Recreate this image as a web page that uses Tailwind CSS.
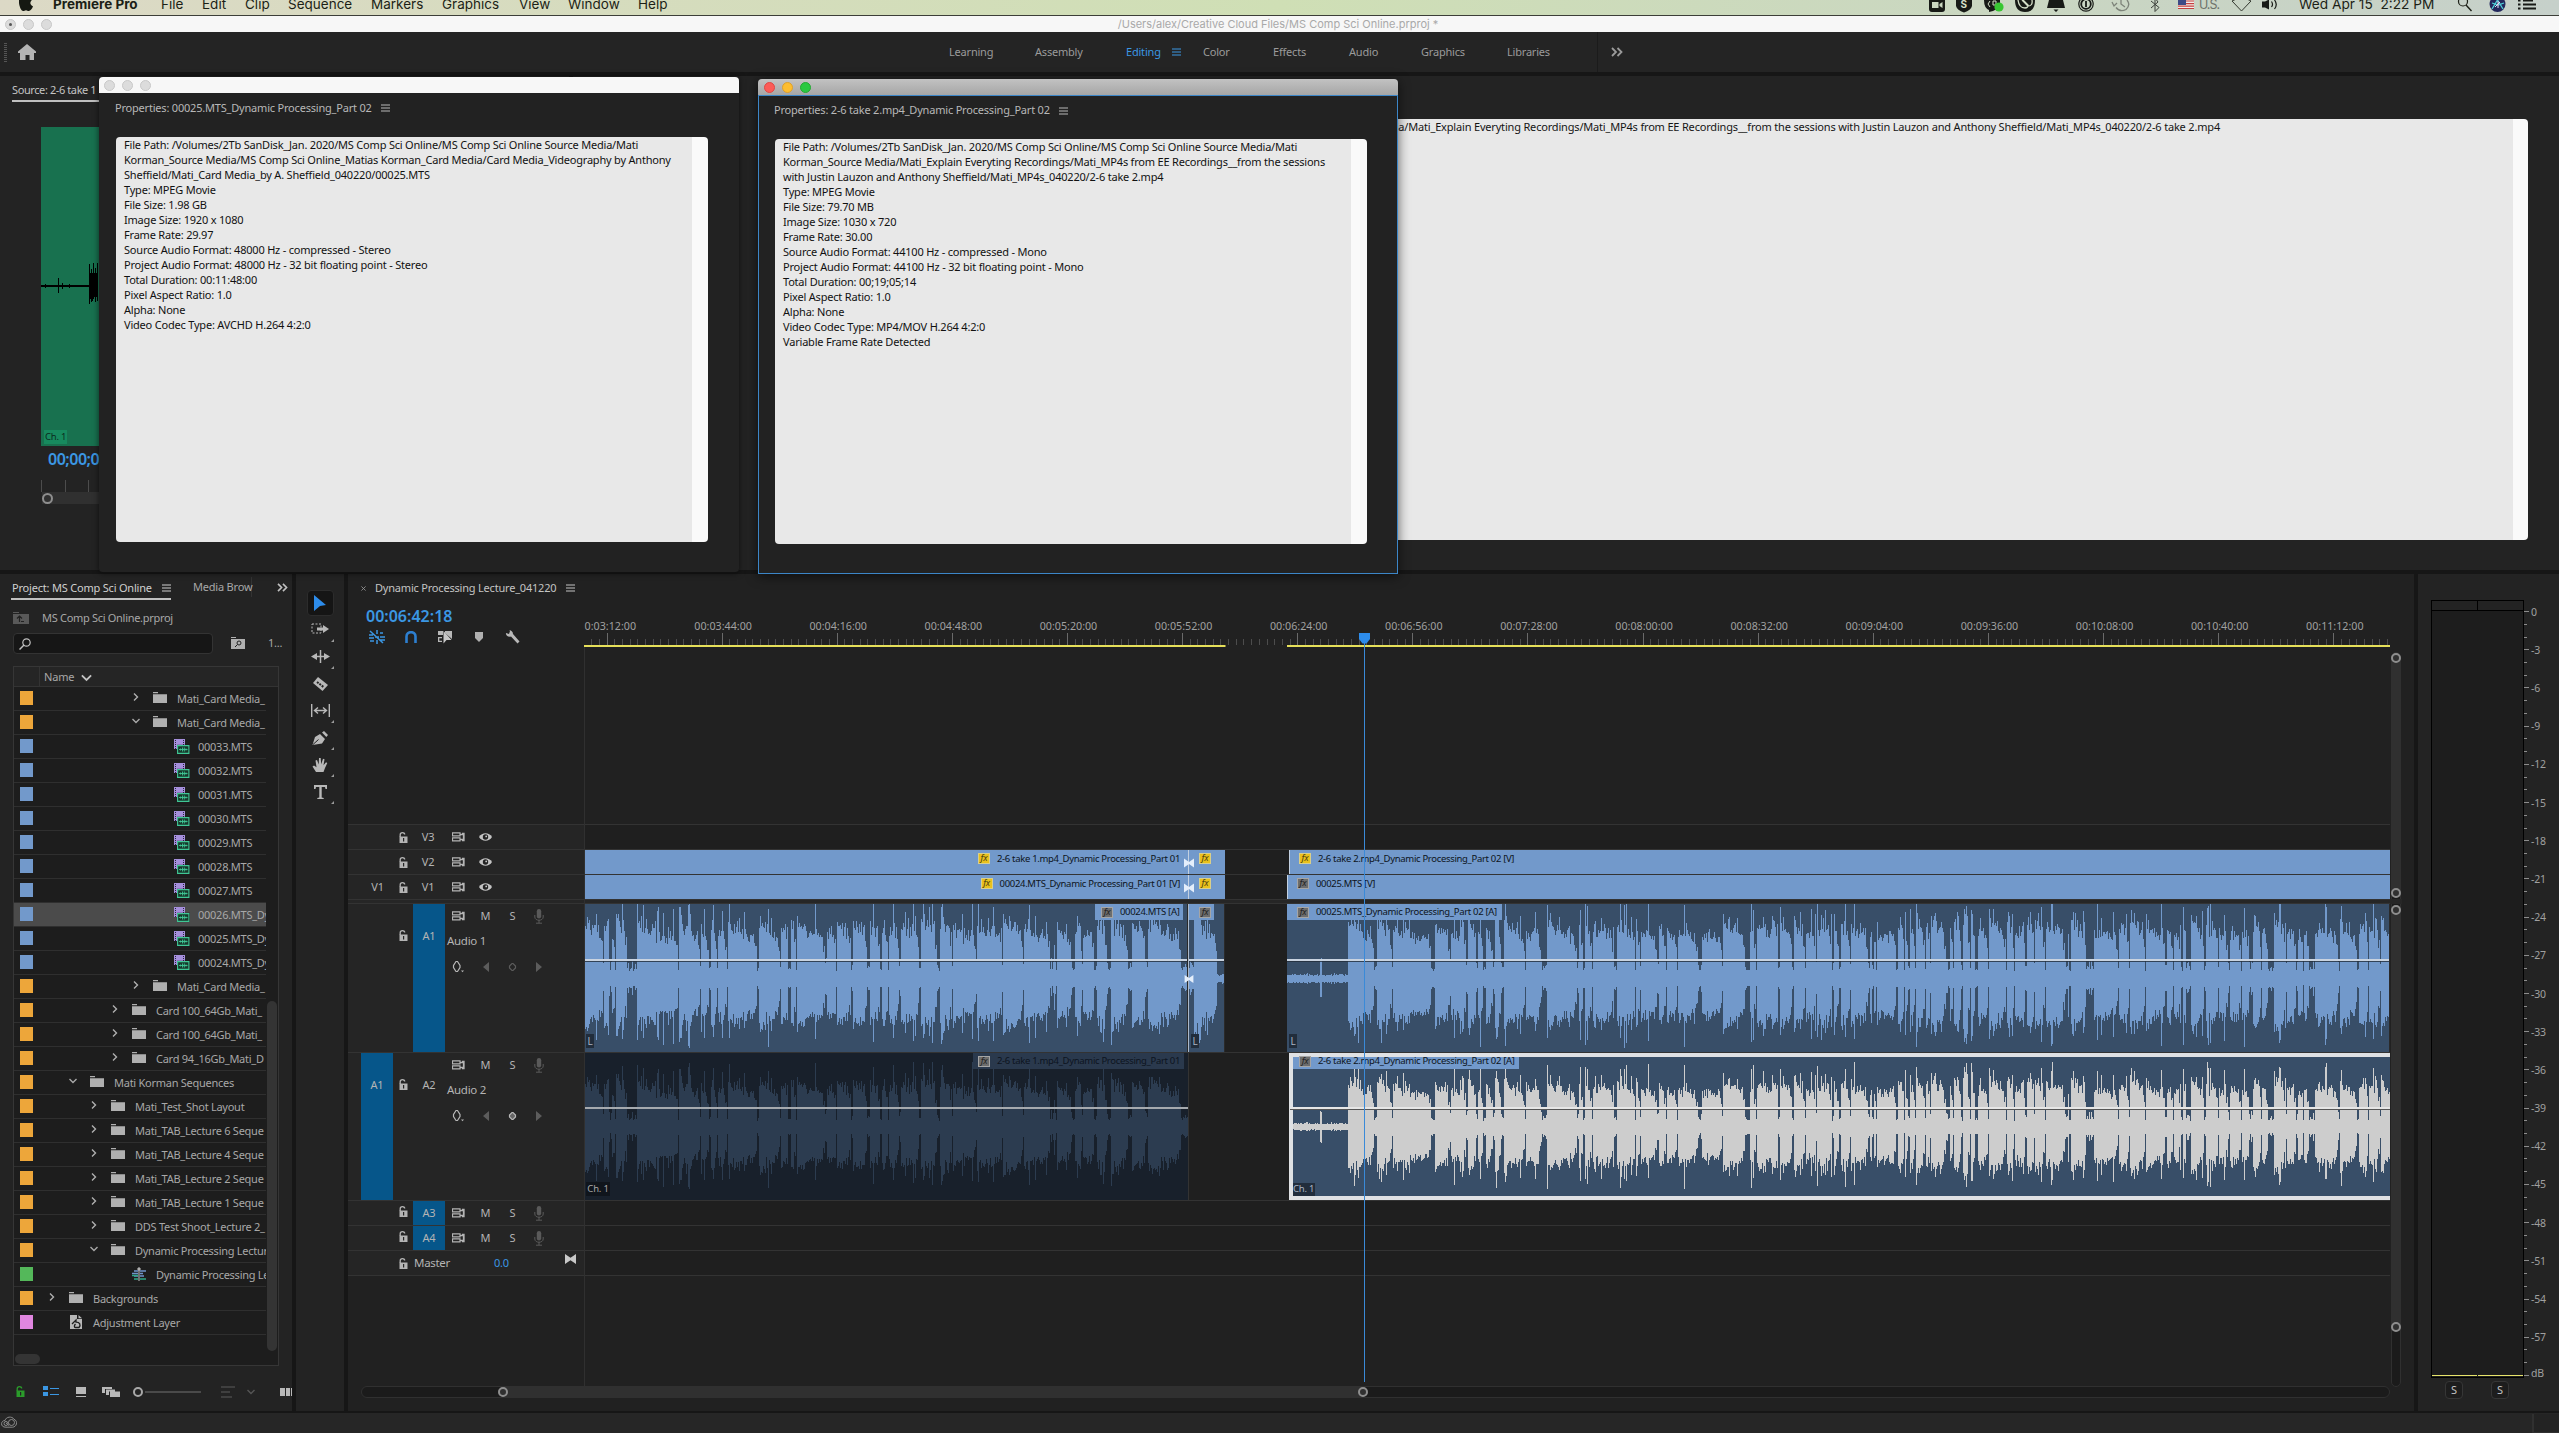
<!DOCTYPE html>
<html lang="en">

<head>
  <meta charset="UTF-8">
  <meta name="viewport" content="width=device-width, initial-scale=1.0">
  <title>MS Comp Sci Online.prproj</title>
  <script src="https://cdn.jsdelivr.net/npm/@tailwindcss/browser@4"></script>
</head>

<body class="bg-[#161616] font-['Noto_Sans','Open_Sans',sans-serif] text-[11px] tracking-[-0.2px] text-[#a8a8a8] overflow-hidden">

  <!-- Icon symbols -->
  <svg class="hidden">
    <symbol id="menu" viewBox="0 0 9 8"><path d="M0 1h9M0 4h9M0 7h9" stroke="currentColor" stroke-width="1" /></symbol>
    <symbol id="more" viewBox="0 0 12 10"><path d="M1 1l4 4-4 4M6.500 1l4 4-4 4" fill="none" stroke="currentColor" stroke-width="1.800" /></symbol>
    <symbol id="folder" viewBox="0 0 14 12"><path d="M0 0h5v1.200H0zM0 2.200h14V11H0z" fill="#b0b0b0" /></symbol>
    <symbol id="right" viewBox="0 0 6 8"><path d="M1 .5L4.500 4 1 7.500" fill="none" stroke="#b0b0b0" stroke-width="1.400" /></symbol>
    <symbol id="down" viewBox="0 0 8 6"><path d="M.5 1L4 4.500 7.500 1" fill="none" stroke="currentColor" stroke-width="1.400" /></symbol>
    <symbol id="mts" viewBox="0 0 16 16">
      <path d="M0 0h11v10H0z" fill="#a58fdc" />
      <path d="M1.500 1v9M9.500 1v9" stroke="#2a2140" stroke-width="1" stroke-dasharray="1 1" />
      <path d="M3 5.800h13v9H3z" fill="#1d1d1d" />
      <path d="M3.600 6.600h11.300v7.800H3.600z" fill="#17382c" stroke="#3fc795" stroke-width="1.100" />
      <path d="M5 10.500h8.500M6.500 9.500v2M8.500 8.500v4M10.300 8.500v4M12 9.500v2" stroke="#3fc795" stroke-width=".9" />
    </symbol>
    <symbol id="seq" viewBox="0 0 14 14">
      <path d="M2 4h4M8 4h6M0 6.500h6M8 6.500h3M2 9h4M8 9h4" stroke="#6f94c9" stroke-width="1.300" />
      <path d="M0 8.500h6M2 12h4M8 12h6" stroke="#2fa887" stroke-width="1.500" />
      <path d="M7 1v13M6 1h2v2H6z" stroke="#c4c4c4" stroke-width="1" fill="none" />
    </symbol>
    <symbol id="adj" viewBox="0 0 12 14">
      <path d="M0 0h7v4h5v10H0z" fill="#b8b8b8" /><path d="M8.500 0L12 3.300H8.500z" fill="#b8b8b8" />
      <path d="M2 9l4-4v2.200c4 0 5 2.800 3 5.300H5.500c-1.500 0-1.500-2 0-3.500" fill="none" stroke="#1d1d1d" stroke-width="1.300" />
    </symbol>
    <symbol id="lock" viewBox="0 0 9 11"><path d="M1.200 5V2.800C1.200 0 5.700 0 5.700 2.600" fill="none" stroke="currentColor" stroke-width="1.300" /><path fill-rule="evenodd" d="M.5 4.600h8V11h-8zM4 6h1.200v3.500H4z" fill="currentColor" /></symbol>
    <symbol id="sync" viewBox="0 0 13 10"><path d="M.5.8h7.500v3H.5zM.5 5.800h7.500v3H.5z" fill="none" stroke="currentColor" stroke-width="1.200" /><path d="M8 2.500h3.500v5H8M10 1.500h2v7h-2" fill="none" stroke="currentColor" stroke-width="1.300" /></symbol>
    <symbol id="eye" viewBox="0 0 13 10"><path d="M0 5C3 0 10 0 13 5 10 10 3 10 0 5z" fill="#c4c4c4" /><circle cx="6.500" cy="5" r="2.700" fill="#222" /><circle cx="7.200" cy="4.400" r=".9" fill="#ccc" /></symbol>
    <symbol id="mic" viewBox="0 0 10 15"><rect x="2.800" y="0" width="4.400" height="9.500" rx="2.200" fill="#5a5a5a" /><path d="M.8 6v2c0 4.300 8.400 4.300 8.400 0V6M5 11v3M2 14.200h6" fill="none" stroke="#5a5a5a" stroke-width="1" /></symbol>
    <symbol id="bow" viewBox="0 0 11 10"><path d="M0 0l5.500 3.800L11 0v10L5.500 6.200 0 10z" fill="currentColor" /></symbol>
    <symbol id="corner" viewBox="0 0 3 3"><path d="M3 0v3H0z" fill="#9a9a9a" /></symbol>
  </svg>

  <div class="relative w-[2559px] h-[1433px] flex flex-col">

    <!-- macOS menu bar -->
    <header class="h-[15px] shrink-0 flex items-start justify-between bg-linear-to-r from-[#dcd9c6] via-[#cfdfb5] to-[#c6d0ca] text-[#1c1f16] font-['Inter',sans-serif] text-[13.5px] leading-[9px] tracking-normal overflow-hidden">
      <div class="flex">
        <svg class="w-[14px] h-[11px] ml-[19px] mr-5" viewBox="0 0 14 11"><path d="M0 0h13c-2.500 2-2 5 1 6.300C13 9 11.500 11 9.800 11 8.500 11 8.300 10.200 7 10.200S5.300 11 4.200 11C2 11 .3 6 0 3z" fill="#151812" /></svg>
        <span class="w-[108px] font-bold">Premiere Pro</span>
        <span class="w-[41px]">File</span><span class="w-[43px]">Edit</span><span class="w-[43px]">Clip</span><span class="w-[83px]">Sequence</span><span class="w-[71px]">Markers</span><span class="w-[77px]">Graphics</span><span class="w-[49px]">View</span><span class="w-[70px]">Window</span><span>Help</span>
      </div>
      <svg class="w-[630px] h-[15px]" viewBox="1929 0 630 15">
        <path fill-rule="evenodd" d="M1929 0h16v9q0 3-3 3h-10q-3 0-3-3zM1932 2h6.500v6h-6.500zM1939.500 4l3-2v6l-3-2z" fill="#171a16" />
        <path d="M1956 0h16v6q-1 4-8 6.500-7-2.500-8-6.500z" fill="#171a16" />
        <text x="1960.500" y="8" font-size="10" font-weight="700" fill="#d5dfc8">S</text>
        <path d="M1984 0h16v6q-3 4-7 5l-4 1v-2q-5-2-5-10z" fill="#171a16" /><path d="M1990 1l-2 3 2 3M1993 1h3v4h-3z" stroke="#d5dfc8" fill="none" />
        <circle cx="1999" cy="7" r="4.600" fill="#38c732" />
        <path d="M2015 0h20q0 12-10 12t-10-12z" fill="#171a16" /><path d="M2018 0q1 8 7 8 3 0 3-3l-5-5M2022 0l6 6q5 0 4-6" fill="none" stroke="#d5dfc8" stroke-width="1.300" />
        <path d="M2049 0h14l2 8h-18zM2053.500 9.500h5l-2.500 2.500z" fill="#171a16" />
        <circle cx="2086" cy="4" r="7.200" fill="none" stroke="#171a16" stroke-width="1.200" /><circle cx="2086" cy="4" r="4.800" fill="none" stroke="#171a16" stroke-width="1.800" /><path d="M2086 1v6" stroke="#171a16" stroke-width="1.800" />
        <path d="M2127 0q4 5-1 9.500-6 3-10-2M2112 2l2 4 3-3M2121 0v4l4 3" fill="none" stroke="#7d8379" stroke-width="1.300" />
        <path d="M2151 1l8 6.500-4 4V0M2151 8l7-6-1.500-2" fill="none" stroke="#3a3f38" />
        <path d="M2178 0h16v9h-16z" fill="#f3ecea" /><path d="M2178 1h16M2178 3.600h16M2178 6.200h16M2178 8.500h16" stroke="#c5403f" stroke-width="1.200" /><path d="M2178 0h8v5h-8z" fill="#3d4a86" />
        <text x="2199" y="8.500" font-size="12.500" fill="#6d736b" textLength="21">U.S.</text>
        <path d="M2232 1q10-6 19 0l-9.500 10z" fill="none" stroke="#33382f" />
        <path d="M2262 1.500h3l4-2v10l-4-2h-3z" fill="#171a16" /><path d="M2271.500 1.500q2 3 0 5.500M2274.500 0q3.500 4.500 0 9" fill="none" stroke="#171a16" stroke-width="1.200" />
        <text x="2299" y="8.700" font-size="13.700" fill="#1c1f16" xml:space="preserve">Wed Apr 15  2:22 PM</text>
        <circle cx="2463" cy="1.500" r="4.500" fill="none" stroke="#1c1f16" stroke-width="1.200" /><path d="M2466 5l5.500 6" stroke="#1c1f16" stroke-width="1.400" />
        <circle cx="2497.500" cy="4" r="8" fill="#23285c" /><path d="M2492 9l5.500-9 5.500 9M2492 3l6 2 6-2" fill="none" stroke="#4fd0d8" stroke-width="1.300" /><path d="M2495 7l5-5M2498 1v7" stroke="#e8d8f4" stroke-width="1" />
        <path d="M2523 .5h10M2523 4.500h13M2523 8.500h13" stroke="#171a16" stroke-width="1.800" /><path d="M2518 .5h2.500M2518 4.500h2.500M2518 8.500h2.500" stroke="#171a16" stroke-width="1.800" />
      </svg>
    </header>

    <!-- Application title bar -->
    <div class="h-[17px] shrink-0 border-t border-[#3c3e38] bg-[#f7f7f7] flex items-center relative">
      <div class="flex gap-[7px] pl-[5px]">
        <span class="size-[11px] rounded-full bg-[#dcdcdc] border border-[#c8c8c8] flex items-center justify-center"><i class="size-[3px] rounded-full bg-[#555]"></i></span>
        <span class="size-[11px] rounded-full bg-[#dcdcdc] border border-[#c8c8c8]"></span>
        <span class="size-[11px] rounded-full bg-[#dcdcdc] border border-[#c8c8c8]"></span>
      </div>
      <p class="w-full pr-[55px] text-center font-['Inter',sans-serif] text-[11px] tracking-normal text-[#a9a9a9]">/Users/alex/Creative Cloud Files/MS Comp Sci Online.prproj *</p>
    </div>

    <!-- Workspace tabs -->
    <nav class="h-10 shrink-0 bg-[#242424] flex items-center text-[#9b9b9b]">
      <div class="w-[3px] h-[19px] ml-1 bg-[repeating-linear-gradient(#555_0_1px,transparent_1px_2px)]"></div>
      <svg class="w-[18px] h-4 ml-[11px] mr-[913px]" viewBox="0 0 18 16"><path d="M9 0l9 7.500V9h-2v7h-4.500v-5h-4v5H2V9H0V7.500z" fill="#b4b4b4" /></svg>
      <span class="w-[86px]">Learning</span><span class="w-[91px]">Assembly</span>
      <span class="w-[46px] text-[#3b97e3]">Editing</span>
      <svg class="w-[9px] h-2 mr-[22px] text-[#3b97e3]"><use href="#menu" /></svg>
      <span class="w-[70px]">Color</span><span class="w-[76px]">Effects</span><span class="w-[72px]">Audio</span><span class="w-[86px]">Graphics</span><span class="w-[90px]">Libraries</span>
      <i class="w-px h-full bg-[#1b1b1b]"></i>
      <svg class="w-3 h-[10px] ml-[13px]"><use href="#more" /></svg>
    </nav>

    <!-- Source monitor and properties panel -->
    <section class="h-[494px] mt-1 shrink-0 flex gap-1">
      <div class="w-[745px] bg-[#232323] pl-3">
        <p class="w-[200px] mt-[5px] h-[21px] leading-[18px] tracking-[-0.4px] border-b-2 border-[#c0c0c0] whitespace-nowrap overflow-hidden text-[#c4c4c4]">Source: 2-6 take 1</p>
        <div class="ml-[29px] mt-[25px] w-[200px] h-[319px] bg-[#18714f] relative">
          <svg class="absolute inset-0 w-[200px] h-[319px]" viewBox="0 0 200 319">
            <path d="M0 159h48" stroke="#000" stroke-width="2" />
            <path d="M17.500 151v15M4.500 157v4M21.500 156v6M28.500 157v4M48.500 137v40M50.500 142v33M52.500 136v36M54.500 141v34M56.500 136v38M49.500 146v26M51.500 146v28M53.500 146v24M55.500 146v24" stroke="#000" />
          </svg>
          <span class="absolute left-[3px] bottom-[2px] h-[14px] leading-[14px] px-[1px] whitespace-nowrap bg-[#178a5e] text-[#0a2b1d] text-[9.5px]">Ch. 1</span>
        </div>
        <p class="ml-9 mt-[2px] text-base leading-[22px] font-semibold tracking-[-0.5px] text-[#3b97e3]">00;00;03;14</p>
        <div class="ml-[29px] mt-[10px] w-[200px] h-3 bg-[repeating-linear-gradient(90deg,#4c4c4c_0_1px,transparent_1px_23.5px)]"></div>
        <div class="ml-[30px] w-[200px] h-3 bg-[#303030] pt-px"><i class="block size-[11px] rounded-full border-2 border-[#8e8e8e]"></i></div>
      </div>
      <div class="flex-1 bg-[#232323] pt-[43px] pl-[200px] pr-[31px]">
        <div class="h-[421px] bg-[#e8e8e8] rounded-sm border-r-[15px] border-[#fafafa] flex justify-end pr-[293px] overflow-hidden">
          <p class="whitespace-nowrap leading-[15px] tracking-[-0.18px] text-[#151515]">File Path: /Volumes/2Tb SanDisk_Jan. 2020/MS Comp Sci Online/MS Comp Sci Online Source Media/Mati Korman_Source Media/Mati_Explain Everyting Recordings/Mati_MP4s from EE Recordings__from the sessions with Justin Lauzon and Anthony Sheffield/Mati_MP4s_040220/2-6 take 2.mp4</p>
        </div>
      </div>
    </section>

    <!-- Lower panels -->
    <section class="h-[837px] mt-1 shrink-0 flex gap-1">

      <!-- Project bin -->
      <div class="w-[292px] bg-[#232323] flex flex-col overflow-hidden">
        <div class="flex items-center h-[26px] mt-[1px] pl-[11px] pb-[2px] whitespace-nowrap">
          <div class="w-[160px] h-[22px] mt-1 flex items-center justify-between border-b-2 border-[#c0c0c0] text-[#d0d0d0] pl-px">Project: MS Comp Sci Online<svg class="w-[9px] h-2"><use href="#menu" /></svg></div>
          <div class="w-[59px] ml-[22px] border-r border-[#333] h-[20px] leading-5">Media Brow</div>
          <svg class="w-[11px] h-[9px] ml-[25px] text-[#c0c0c0]"><use href="#more" /></svg>
        </div>
        <div class="flex items-center h-5 mt-[9px] pl-[13px] gap-[13px]">
          <svg class="w-4 h-3" viewBox="0 0 16 12"><path d="M0 0h6v1H0zM0 2h16v10H0z" fill="#595959" /><path d="M8 9.500h3M6.500 10V4.500M4 6.500L6.500 4 9 6.500" fill="none" stroke="#222" stroke-width="1.200" /></svg>
          <span class="tracking-[-0.3px]">MS Comp Sci Online.prproj</span>
        </div>
        <div class="flex items-center pl-[13px] mt-[6px] h-[21px]">
          <div class="w-[200px] h-[21px] bg-[#161616] border border-[#333] rounded-sm pl-[5px] pt-[4px]"><svg class="size-3" viewBox="0 0 12 12"><circle cx="7.500" cy="4.500" r="3.700" fill="none" stroke="#c0c0c0" stroke-width="1.200" /><path d="M5 7L.5 11.500" stroke="#c0c0c0" stroke-width="1.500" /></svg></div>
          <svg class="w-[14px] h-3 ml-[18px] mr-[23px]" viewBox="0 0 14 12"><path d="M0 0h5v1H0zM0 2h14v10H0z" fill="#b0b0b0" /><circle cx="8" cy="6" r="2" fill="none" stroke="#222" /><path d="M6.500 7.500L4 10" stroke="#222" /></svg>
          <span>1...</span>
        </div>
        <div class="ml-[13px] mt-[12px] w-[266px] h-[700px] shrink-0 border border-[#363636] bg-[#1d1d1d] relative">
          <div class="h-[20px] flex items-center bg-[#252525] border-b border-[#333]">
            <i class="w-[26px] h-full border-r border-[#333]"></i><span class="ml-1 w-[37px] pt-[2px]">Name</span><svg class="w-[11px] h-2 mt-[4px] text-[#c0c0c0]" viewBox="0 0 8 6"><use href="#down" /></svg>
          </div>
          <div id="bin" class="w-[252px]"></div>
          <i class="absolute right-px top-[334px] w-[10px] h-[350px] rounded-full bg-[#343434]"></i>
          <i class="absolute left-px bottom-px w-[25px] h-[10px] rounded-full bg-[#343434]"></i>
        </div>
        <div class="flex items-center h-[50px] mt-[1px] shrink-0 pl-4 text-[#555]">
          <svg class="w-[9px] h-[11px] text-[#2b9c2b]"><use href="#lock" /></svg>
          <svg class="w-4 h-[11px] ml-[18px]" viewBox="0 0 16 11"><path d="M0 0h5v4H0zM0 6h5v4H0zM7 2h9v1H7zM7 8h9v1H7z" fill="#3b97e3" /></svg>
          <svg class="w-[10px] h-[10px] ml-[17px]" viewBox="0 0 10 10"><path d="M0 0h10v7H0zM0 9h10v1H0z" fill="#b8b8b8" /></svg>
          <svg class="w-[18px] h-[10px] ml-4" viewBox="0 0 18 10"><path d="M0 0h10v2H3v4H0zM4 2.500h9v2H7V8H4zM8 4.500h10V10H8z" fill="#b8b8b8" /></svg>
          <i class="size-[10px] rounded-full border-2 border-[#a8a8a8] ml-[13px]"></i>
          <i class="w-14 h-[2px] bg-[#4a4a4a] ml-[2px]"></i>
          <svg class="w-[14px] h-3 ml-5" viewBox="0 0 14 12"><path d="M0 1h14M0 6h9M0 11h11" stroke="#4a4a4a" stroke-width="1.300" /></svg>
          <svg class="w-2 h-[6px] ml-3"><use href="#down" /></svg>
          <svg class="w-3 h-2 ml-[25px] shrink-0" viewBox="0 0 12 8"><path d="M0 0h5v8H0zM6 0h4v8H6zM11 0h1v8h-1z" fill="#b8b8b8" /></svg>
        </div>
      </div>

      <!-- Tools -->
      <div class="w-12 bg-[#232323] pt-[16px] flex flex-col items-center text-[#b8b8b8]">
        <div class="w-[27px] h-[26px] rounded-sm bg-[#151515] border border-[#2c2c2c] flex items-center justify-center"><svg class="w-3 h-4" viewBox="0 0 12 16"><path d="M0 0l12 10-6 1-6 5z" fill="#2d8ceb" /></svg></div>
        <div id="tools" class="flex flex-col"></div>
      </div>

      <!-- Timeline -->
      <div class="w-[2066px] bg-[#212121] relative">
        <div class="flex flex-col h-[250px]">
          <div class="flex items-center h-7 pl-[13px] text-[#c4c4c4]">
            <svg class="size-[5px] mr-[9px]" viewBox="0 0 6 6"><path d="M.5.5l5 5M5.500.5l-5 5" stroke="#999" /></svg>
            <span class="w-[191px]">Dynamic Processing Lecture_041220</span>
            <svg class="w-[9px] h-2"><use href="#menu" /></svg>
          </div>
          <div class="flex h-[46px]">
            <div class="w-[236px] pt-[3px]">
              <p class="pl-[18px] text-base leading-[22px] font-semibold tracking-[0px] text-[#3b97e3]">00:06:42:18</p>
              <div class="flex items-center h-4 mt-[2px] pl-[21px]">
                <svg class="w-4 h-[14px]" viewBox="0 0 16 14"><path d="M0 5h4M0 8h5M1 11h4M11 3h3M11 7h5M11 10h5M8 0v4M8 10v4M1 1l13 12M10 7h-4" stroke="#3b97e3" stroke-width="1.500" fill="none" /></svg>
                <svg class="w-3 h-3 ml-5" viewBox="0 0 12 12"><path d="M1.500 12V5.500C1.500-.3 10.500-.3 10.500 5.500V12" fill="none" stroke="#2d7fd0" stroke-width="2.600" /></svg>
                <svg class="w-[15px] h-[14px] ml-[21px]" viewBox="0 0 15 14"><path d="M0 1h5v4H0zM7 1h7v8l-7-6zM0 7h4v1.300H1.300v2.400H4V12H0z" fill="#b8b8b8" /><path d="M5.500 1v12.500l3-3.500h5z" fill="#c8c8c8" /></svg>
                <svg class="w-2 h-[10px] ml-[22px]" viewBox="0 0 8 10"><path d="M0 0h8v6l-4 4-4-4z" fill="#b0b0b0" /></svg>
                <svg class="w-[15px] h-[14px] ml-[22px]" viewBox="0 0 15 14"><path d="M1 3l3 1 1-3C3-.5 8 0 8 4l6.500 7.500-2 2L6 6.500C3 7.500.5 5 1 3z" fill="#b8b8b8" /></svg>
              </div>
            </div>
            <svg id="ruler" class="w-[1806px] h-[46px] overflow-hidden" viewBox="584 602 1806 46"></svg>
          </div>
        </div>

        <div id="tracks" class="w-[2042px] border-b border-[#333]"></div>

        <!-- horizontal zoom bar -->
        <div class="mt-[110px] ml-[13px] w-[2029px] h-[12px] rounded-full bg-[#1b1b1b] border border-[#303030] flex items-center pl-[136px]">
          <div class="w-[870px] h-[10px] rounded-full bg-[#303030] flex items-center justify-between"><i class="size-[10px] rounded-full border-2 border-[#8e8e8e]"></i><i class="size-[10px] rounded-full border-2 border-[#8e8e8e]"></i></div>
        </div>

        <!-- header divider, vertical bars -->
        <i class="absolute left-[236px] top-[73px] w-px h-[739px] bg-[#303030]"></i>
        <div class="absolute left-[2043px] top-[78px] w-[10px] h-[735px] rounded-full bg-[#1b1b1b] border border-[#303030]"></div>
        <div class="absolute left-[2043px] top-[79px] w-[10px] h-[245px] rounded-full bg-[#303030] flex flex-col justify-between"><i class="size-[10px] rounded-full border-2 border-[#8e8e8e]"></i><i class="size-[10px] rounded-full border-2 border-[#8e8e8e]"></i></div>
        <i class="absolute left-[2042px] top-[325px] w-3 h-[5px] bg-[#262626]"></i>
        <div class="absolute left-[2043px] top-[331px] w-[10px] h-[427px] rounded-full bg-[#303030] flex flex-col justify-between"><i class="size-[10px] rounded-full border-2 border-[#8e8e8e]"></i><i class="size-[10px] rounded-full border-2 border-[#8e8e8e]"></i></div>

        <!-- playhead -->
        <i class="absolute left-[1016px] top-[66px] w-px h-[742px] bg-[#3a8ad8]"></i>
        <svg class="absolute left-[1011px] top-[59px] w-[11px] h-[11px]" viewBox="0 0 11 11"><path d="M0 0h11v6L7.500 10.500h-4L0 6z" fill="#2d8ceb" /></svg>
      </div>

      <!-- Audio meters -->
      <div class="flex-1 bg-[#232323] pl-[13px] pt-[26px]">
        <div class="flex">
          <div class="w-[93px]">
            <div class="h-[10px] border border-black border-b-0 flex"><i class="w-[46px] border-r border-black"></i></div>
            <div class="h-[768px] border border-black bg-[#1d1d1d] flex items-end gap-px"><i class="flex-1 h-px mb-px bg-[#e6e36a]"></i><i class="flex-1 h-px mb-px bg-[#e6e36a]"></i></div>
          </div>
          <svg id="meter" class="w-[35px] h-[790px] mt-[-6px]" viewBox="2524 594 35 790"></svg>
        </div>
        <div class="flex gap-7 pl-[14px] -mt-[3px] text-[#c4c4c4]">
          <span class="size-[18px] border border-[#363636] rounded-sm bg-[#1d1d1d] flex items-center justify-center">S</span>
          <span class="size-[18px] border border-[#363636] rounded-sm bg-[#1d1d1d] flex items-center justify-center">S</span>
        </div>
      </div>
    </section>

    <!-- Status bar -->
    <footer class="h-5 mt-[2px] shrink-0 bg-[#262626] flex items-center justify-between pl-px">
      <svg class="w-4 h-3 mb-[3px]" viewBox="0 0 16 12"><path d="M5 11.200C-1 11.500-.5 4.500 4 4.500 5 .5 11 0 13 3.200c4.500 2 2.500 8-1.500 8z" fill="none" stroke="#8c8c8c" /><circle cx="5" cy="7.500" r="2" fill="none" stroke="#8c8c8c" /><circle cx="10.500" cy="6.500" r="3" fill="none" stroke="#8c8c8c" /><path d="M5 7l3 2.500" stroke="#8c8c8c" /></svg>
      <i class="w-[27px] h-[19px] border-l-2 border-b border-[#303030] bg-[#232323]"></i>
    </footer>

    <!-- Floating properties window, inactive -->
    <div class="absolute left-[99px] top-[77px] w-[640px] h-[496px] bg-[#222] rounded-t-sm rounded-b-sm shadow-[0_0_6px_rgba(0,0,0,0.6)] border-b border-[#111] overflow-hidden">
      <div class="h-4 bg-[#f7f7f7] flex items-center gap-[7px] pl-[5px]">
        <i class="size-[11px] rounded-full bg-[#dcdcdc] border border-[#c8c8c8]"></i><i class="size-[11px] rounded-full bg-[#dcdcdc] border border-[#c8c8c8]"></i><i class="size-[11px] rounded-full bg-[#dcdcdc] border border-[#c8c8c8]"></i>
      </div>
      <div class="h-[30px] flex items-center pl-[16px] text-[#b8b8b8]"><span class="w-[266px]">Properties: 00025.MTS_Dynamic Processing_Part 02</span><svg class="w-[9px] h-2"><use href="#menu" /></svg></div>
      <div class="ml-[17px] mt-[14px] w-[592px] h-[405px] rounded-sm bg-[#e8e8e8] border-r-[16px] border-[#fafafa] pl-2 leading-[15px] text-[#111] whitespace-nowrap">
        File Path: /Volumes/2Tb SanDisk_Jan. 2020/MS Comp Sci Online/MS Comp Sci Online Source Media/Mati<br>
        Korman_Source Media/MS Comp Sci Online_Matias Korman_Card Media/Card Media_Videography by Anthony<br>
        Sheffield/Mati_Card Media_by A. Sheffield_040220/00025.MTS<br>
        Type: MPEG Movie<br>File Size: 1.98 GB<br>Image Size: 1920 x 1080<br>Frame Rate: 29.97<br>
        Source Audio Format: 48000 Hz - compressed - Stereo<br>
        Project Audio Format: 48000 Hz - 32 bit floating point - Stereo<br>
        Total Duration: 00:11:48:00<br>Pixel Aspect Ratio: 1.0<br>Alpha: None<br>Video Codec Type: AVCHD H.264 4:2:0
      </div>
    </div>

    <!-- Floating properties window, active -->
    <div class="absolute left-[758px] top-[79px] w-[640px] h-[495px] bg-[#222] rounded-t-sm shadow-[0_2px_12px_rgba(0,0,0,0.6)]">
      <div class="h-4 rounded-t-sm bg-linear-to-b from-[#c2c2c2] to-[#a6a6a6] flex items-center gap-[7px] pl-[6px]">
        <i class="size-[11px] rounded-full bg-[#fc5b57] border border-[#df4744]"></i><i class="size-[11px] rounded-full bg-[#fdbd30] border border-[#dda02c]"></i><i class="size-[11px] rounded-full bg-[#2ac941] border border-[#24a932]"></i>
      </div>
      <div class="h-[479px] border border-[#3c86c8]">
        <div class="h-[29px] flex items-center pl-[15px] text-[#b8b8b8]"><span class="w-[285px]">Properties: 2-6 take 2.mp4_Dynamic Processing_Part 02</span><svg class="w-[9px] h-2"><use href="#menu" /></svg></div>
        <div class="ml-4 mt-[14px] w-[592px] h-[405px] rounded-sm bg-[#e8e8e8] border-r-[16px] border-[#fafafa] pl-2 leading-[15px] text-[#111] whitespace-nowrap">
          File Path: /Volumes/2Tb SanDisk_Jan. 2020/MS Comp Sci Online/MS Comp Sci Online Source Media/Mati<br>
          Korman_Source Media/Mati_Explain Everyting Recordings/Mati_MP4s from EE Recordings__from the sessions<br>
          with Justin Lauzon and Anthony Sheffield/Mati_MP4s_040220/2-6 take 2.mp4<br>
          Type: MPEG Movie<br>File Size: 79.70 MB<br>Image Size: 1030 x 720<br>Frame Rate: 30.00<br>
          Source Audio Format: 44100 Hz - compressed - Mono<br>
          Project Audio Format: 44100 Hz - 32 bit floating point - Mono<br>
          Total Duration: 00;19;05;14<br>Pixel Aspect Ratio: 1.0<br>Alpha: None<br>Video Codec Type: MP4/MOV H.264 4:2:0<br>Variable Frame Rate Detected
        </div>
      </div>
    </div>
  </div>

  <script>
    // ---- project bin rows: label colour, depth, arrow, icon, name
    const O = 'bg-[#eda63a]', B = 'bg-[#7299cb]', G = 'bg-[#54b85a]', P = 'bg-[#e086e0]';
    const bin = [
      [O, 5, 'right', 'folder', 'Mati_Card Media_'], [O, 5, 'down', 'folder', 'Mati_Card Media_'],
      [B, 6, '', 'mts', '00033.MTS'], [B, 6, '', 'mts', '00032.MTS'], [B, 6, '', 'mts', '00031.MTS'], [B, 6, '', 'mts', '00030.MTS'],
      [B, 6, '', 'mts', '00029.MTS'], [B, 6, '', 'mts', '00028.MTS'], [B, 6, '', 'mts', '00027.MTS'],
      [B, 6, '', 'mts', '00026.MTS_Dynamic', true], [B, 6, '', 'mts', '00025.MTS_Dynamic'], [B, 6, '', 'mts', '00024.MTS_Dynamic'],
      [O, 5, 'right', 'folder', 'Mati_Card Media_'],
      [O, 4, 'right', 'folder', 'Card 100_64Gb_Mati_'], [O, 4, 'right', 'folder', 'Card 100_64Gb_Mati_'], [O, 4, 'right', 'folder', 'Card 94_16Gb_Mati_D'],
      [O, 2, 'down', 'folder', 'Mati Korman Sequences'],
      [O, 3, 'right', 'folder', 'Mati_Test_Shot Layout'],
      [O, 3, 'right', 'folder', 'Mati_TAB_Lecture 6 Seque'], [O, 3, 'right', 'folder', 'Mati_TAB_Lecture 4 Seque'],
      [O, 3, 'right', 'folder', 'Mati_TAB_Lecture 2 Seque'], [O, 3, 'right', 'folder', 'Mati_TAB_Lecture 1 Seque'],
      [O, 3, 'right', 'folder', 'DDS Test Shoot_Lecture 2_'], [O, 3, 'down', 'folder', 'Dynamic Processing Lecture'],
      [G, 4, '', 'seq', 'Dynamic Processing Lecture'],
      [O, 1, 'right', 'folder', 'Backgrounds'], [P, 1, '', 'adj', 'Adjustment Layer']
    ];
    const iconBox = { folder: 'w-[14px] h-3', mts: 'w-4 h-4 mt-[2px]', seq: 'w-[14px] h-[14px]', adj: 'w-[14px] h-[14px]' };
    document.getElementById('bin').innerHTML = bin.map(([color, depth, arrow, icon, name, selected]) => `
      <div class="flex items-center h-6 border-b border-[#2f2f2f] overflow-hidden whitespace-nowrap ${selected ? 'bg-[#4b4b4b]' : ''}">
        <i class="w-[13px] h-[14px] ml-[6px] mb-[1px] shrink-0 ${color}"></i>
        <div class="shrink-0 flex justify-end" style="width:${depth * 21 + 2}px">${arrow ? `<svg class="w-2 h-2 mb-[2px] shrink-0"><use href="#${arrow}" /></svg>` : ''}</div>
        <svg class="shrink-0 ml-[13px] ${iconBox[icon]}"><use href="#${icon}" /></svg>
        <span class="shrink-0 pt-[2px] tracking-[-0.26px] ${icon == 'mts' ? 'pl-[8px]' : 'pl-[10px]'}">${name}</span>
      </div>`).join('');

    // ---- tool icons
    const tools = [
      '<path d="M1 1h9v9H1z" fill="none" stroke="currentColor" stroke-dasharray="2 1.500" /><path d="M6 4.500h6V2l6 4-6 4V7.500H6z" fill="currentColor" />',
      '<path d="M9.500 0v13" stroke="currentColor" stroke-width="1.500" /><path d="M0 6.500L6 3v2.700h7V3l6 3.500-6 3.500V7.300H6V10z" fill="currentColor" />',
      '<path d="M7 0l10 8-5.500 6L2 6z" fill="currentColor" /><path d="M6 5l6.500 5" stroke="#232323" stroke-width="2" stroke-dasharray="2 1" />',
      '<path d="M.7 0v13M18.300 0v13M4 6.500h11M7 3.500l-3.500 3L7 9.500M12 3.500l3.500 3-3.500 3" fill="none" stroke="currentColor" stroke-width="1.400" />',
      '<path d="M1.500 14L4 6l5-3 5 5-3 4.500zM11 1.500L13 0l4 4-1.700 2z" fill="currentColor" /><path d="M2 13.500l5.500-5" stroke="#232323" stroke-width="1" />',
      '<path d="M5 14L1.500 8.500 3 7.500l2.500 1.800L4.500 2.500 6 2l1.700 4.500L8 0h1.700l.5 6.300L12 .8l1.500.4-1 6 2.500-3 1.300.8-2.300 5L12.500 14z" fill="currentColor" />',
      '<path d="M3 0h13v4h-1.500l-.5-2h-3.300v10.500l2 .5v1H6.300v-1l2-.5V2H5l-.5 2H3z" fill="currentColor" />'
    ];
    document.getElementById('tools').innerHTML = tools.map((t, i) => `
      <div class="h-[27px] w-[21px] flex items-center relative">
        <svg class="w-[19px] h-[14px] ml-px" viewBox="0 0 19 14">${t}</svg>
        ${i == 2 ? '' : '<svg class="absolute right-[-3px] bottom-[1px] size-[3px]"><use href="#corner" /></svg>'}
      </div>`).join('');

    // ---- time ruler
    const first = 606.5, step = 115.12;
    let r = '';
    for (let i = -2; i < 233; i++) {
      const x = first + i * step / 15;
      if (x > 584) r += `<path d="M${Math.round(x) + .5} ${i % 15 ? 639 : 633}V645" stroke="${i % 15 ? '#4c4c4c' : '#6a6a6a'}" />`;
      if (i >= 0 && i % 15 == 0) {
        const s = 192 + i / 15 * 32, m = Math.floor(s / 60);
        r += `<text x="${i ? x + 1.5 : 636}" y="630" text-anchor="${i ? 'middle' : 'end'}" font-size="10.700" letter-spacing="0" fill="#a0a0a0">${i ? '0' : ''}0:${String(m).padStart(2, '0')}:${String(s % 60).padStart(2, '0')}:00</text>`;
      }
    }
    r += '<path d="M584 646h641.500M1287 646h1103" stroke="#e6e05a" stroke-width="2" />';
    document.getElementById('ruler').innerHTML = r;

    // ---- meter scale
    let m = '';
    for (let i = 0; i <= 60; i++) {
      const y = 611.6 + i * 12.73;
      m += `<path d="M2524 ${Math.floor(y) + .5}h${i % 3 ? 3 : 5}" stroke="#8c8c8c" />`;
      if (i % 3 == 0) m += `<text x="2531" y="${i == 60 ? 1377 : y + 4}" font-size="10.500" fill="#a0a0a0">${i == 60 ? 'dB' : (i ? '-' : '') + i}</text>`;
    }
    document.getElementById('meter').innerHTML = m;

    // ---- waveforms, seeded so that both tracks share the speech pattern
    function random(seed) {
      return () => (seed = (seed * 16807) % 2147483647) / 2147483647;
    }
    // quiet spots in timeline pixels: start, width
    const pauses = [[603, 1], [609, 3], [615, 1], [627, 10], [678, 1], [700, 1], [709, 2], [717, 1], [727, 1], [757, 2], [780, 1], [788, 3], [796, 1], [825, 2],
      [952, 1], [976, 1], [1002, 1], [1023, 1], [1050, 4], [1055, 2], [1071, 4], [1082, 1], [1094, 3], [1107, 4], [1128, 4], [1145, 3], [1181, 13], [1217, 10],
      [1286, 62], [1374, 3], [1392, 1], [1431, 4], [1450, 1], [1466, 2], [1476, 2], [1483, 3], [1493, 2], [1501, 3], [1525, 1], [1541, 6], [1577, 2], [1583, 2],
      [1592, 1], [1614, 3], [1635, 1], [1640, 1], [1657, 2], [1666, 1], [1677, 1], [1698, 4], [1722, 1], [1745, 5], [1756, 1], [1778, 2], [1792, 2],
      [1805, 1], [1816, 1], [1832, 2], [1839, 2], [1850, 1], [1868, 2], [1872, 2], [1876, 1], [1896, 2], [1904, 1], [1908, 2], [1915, 1], [1925, 1], [1930, 1],
      [1946, 4], [1953, 1], [1961, 2], [1970, 1], [1975, 3], [1988, 1], [2006, 1], [2014, 1], [2025, 2], [2034, 1], [2045, 1], [2065, 3], [2069, 2], [2086, 8],
      [2118, 1], [2129, 1], [2145, 1], [2165, 2], [2173, 1], [2181, 2], [2186, 5], [2204, 2], [2218, 1], [2228, 2], [2241, 1], [2249, 4], [2261, 1], [2268, 6],
      [2286, 1], [2296, 2], [2303, 1], [2309, 6], [2338, 2], [2357, 2], [2368, 1], [2380, 1]];
    const rnd = random(4711);
    for (let x = 836; x < 945; x += 6 + rnd() * 14) pauses.push([Math.round(x), 1 + Math.floor(rnd() * 2.8)]);
    const quiet = new Set();
    pauses.forEach(([s, w]) => { for (let i = 0; i < w; i++) quiet.add(s + i); });

    const level = {};
    let swell = 1, drift = 1;
    for (let x = 584; x < 2391; x++) {
      // every phrase starts loud and fades
      if (quiet.has(x) && !quiet.has(x + 1)) swell = .82 + rnd() * .3;
      swell += (.68 - swell) * .06;
      drift = drift * .8 + (.82 + rnd() * .36) * .2;
      const r1 = rnd(), peak = r1 < .1 ? 1.25 + rnd() * .5 : r1 < .25 ? 1.12 : 1;
      const edge = quiet.has(x + 1) || quiet.has(x + 2) ? .75 : 1;
      level[x] = quiet.has(x) ? .15 + rnd() * rnd() * .25 : Math.min(1.35, swell * drift * (.88 + rnd() * .26) * peak * edge);
      if ((x > 1286 && x < 1348) || (x > 1216 && x < 1226)) level[x] = .06 + rnd() * .04;
      if (x == 1320 || x == 1321) level[x] = .36;
    }
    function wave(from, to, cy, up, down, color) {
      const n = random(from);
      let d = '';
      for (let x = from; x < to; x++) {
        const v = level[x];
        d += `M${x - from + .5} ${(cy - v * up * (.92 + n() * .16)).toFixed(0)}V${(cy + v * down * (.88 + n() * .2)).toFixed(0)}`;
      }
      return `<path d="${d}" stroke="${color}" />`;
    }

    const fx = on => `<span class="w-3 h-[11px] shrink-0 border ${on ? 'bg-[#eac11c] border-[#d9cf8a] text-[#4d4213]' : 'bg-[#6d6d6d] border-[#a5a5a5] text-[#222]'} text-[9px] leading-[8px] italic text-center">fx</span>`;
    const label = 'text-[9.5px] tracking-[-0.32px] whitespace-nowrap text-[#0d1420]';
    const line = (w, y) => `<path d="M0 ${y}h${w}" stroke="#c9d3e0" stroke-width="2" /><path d="M0 ${y + 1.5}h${w}" stroke="#222d3a" stroke-opacity=".8" />`;

    const lock = '<svg class="w-[9px] h-[11px] ml-px shrink-0"><use href="#lock" /></svg>';
    const sync = '<svg class="w-[13px] h-[10px] shrink-0"><use href="#sync" /></svg>';
    const ms = `${sync}<span class="w-[27px] text-center ml-[7px]">M</span><span class="w-[27px] text-center">S</span><svg class="w-[10px] h-[15px] ml-[8px]"><use href="#mic" /></svg>`;

    const videoHead = (name, src) => `
      <div class="w-[236px] h-full bg-[#252525] flex items-center text-[#b4b4b4]">
        <span class="w-[33px] ml-[13px] text-center">${src}</span><i class="w-1"></i>${lock}<span class="w-[32px] ml-[4px] mr-[8px] text-center">${name}</span>${sync}
        <svg class="w-[13px] h-[10px] ml-[14px]"><use href="#eye" /></svg>
      </div>`;
    const audioHead = (name, src, title, live) => `
      <div class="w-[236px] h-full bg-[#252525] flex text-[#b4b4b4]">
        <span class="w-[32px] ml-[13px] text-center ${src ? 'bg-[#06568a]' : ''} ${title ? 'pt-[24px]' : 'pt-1'}">${src}</span>
        <i class="w-[5px]"></i><div class="${title ? 'pt-[26px]' : 'pt-[5px]'}">${lock}</div>
        <span class="w-[32px] ml-[5px] text-center ${src ? '' : 'bg-[#06568a]'} ${title ? 'pt-[24px]' : 'pt-1'}">${name}</span>
        <div class="flex-1">
          <div class="flex items-center pl-[7px] h-6">${ms}</div>
          ${title ? `<p class="pl-[2px] text-[11.5px] leading-[26px] tracking-[-0.3px]">${title}</p>
          <svg class="w-[100px] h-[14px] ml-[7px] mt-[6px]" viewBox="0 0 100 14">
            <path d="M4 1.500h1.500L8 5.500v2L5.500 11.500H4L1.500 7.500v-2z" fill="none" stroke="#b8b8b8" stroke-width="1.200" /><path d="M9 10.500h3l-1.500 1.800z" fill="#b8b8b8" />
            <path d="M37 2v10l-6-5zM84 2v10l6-5z" fill="#5c5c5c" /><path d="M60 3.500h1l2.500 2.500v2L61 10.500h-1L57.500 8V6z" fill="${live ? '#666' : 'none'}" stroke="${live ? '#b8b8b8' : '#5c5c5c'}" stroke-width="1.200" />
          </svg>` : ''}
        </div>
      </div>`;

    // one lane: head + clips
    const lane = (h, head, clips) => `<div class="flex border-t border-[#333] ${h}">${head}<div class="flex-1 h-full flex bg-[#1f1f1f] relative overflow-hidden">${clips}</div></div>`;
    const bow = '<svg class="absolute left-[600px] top-[8px] w-[10px] h-[10px] text-[#e4eefb]"><use href="#bow" /></svg>';
    const vclip = (w, on, text, pad) => `<div class="${w} h-full shrink-0 bg-[#7299cb] border-l border-[#c3d0e0] flex items-start gap-[7px] pt-[3px] ${pad}">${fx(on)}<span class="leading-[11px] ${label}">${text}</span></div>`;

    const audio1 = (from, w, inner) => `
      <div class="h-full shrink-0 relative bg-[#384e68] border-r border-[#2a2a2a]" style="width:${w}px">
        <svg class="absolute inset-0 w-full h-full">${wave(from, from + w, 75, 56, 48, '#7299cb')}${line(w, 56)}</svg>
        ${inner}
        <span class="absolute left-[2px] bottom-1 w-2 h-[14px] leading-[14px] bg-[#212d3c] text-[10px] text-center text-[#a8b4c4]">L</span>
      </div>`;

    document.getElementById('tracks').innerHTML =
      lane('h-[25px]', videoHead('V3', ''), '') +
      lane('h-[25px]', videoHead('V2', ''),
        vclip('w-[604px]', true, '2-6 take 1.mp4_Dynamic Processing_Part 01', 'justify-end pr-[8px]') + vclip('w-[37px]', true, '', 'pl-[10px]') +
        '<i class="w-[64px] shrink-0"></i>' + vclip('w-[1101px]', true, '2-6 take 2.mp4_Dynamic Processing_Part 02 [V]', 'pl-[9px]') + bow) +
      lane('h-[25px]', videoHead('V1', 'V1'),
        vclip('w-[604px]', true, '00024.MTS_Dynamic Processing_Part 01 [V]', 'justify-end pr-[8px]') + vclip('w-[37px]', true, '', 'pl-[10px]') +
        '<i class="w-[62px] shrink-0"></i>' + vclip('w-[1103px]', false, '00025.MTS [V]', 'pl-[9px]') + bow) +
      '<div class="h-[4px] border-t border-[#333] bg-[#262626]"></div>' +
      lane('h-[149px]', audioHead('A1', '', 'Audio 1', false),
        audio1(584, 604, `<div class="absolute right-1 top-0 w-[88px] h-4 bg-[#7299cb] flex items-center gap-[7px] pl-[6px] ${label}">${fx(false)}00024.MTS [A]</div>`) +
        '<i class="w-px bg-[#aab8ca]"></i>' +
        audio1(1189, 36, `<div class="absolute left-0 top-0 w-[25px] h-4 bg-[#7299cb] flex items-center pl-[10px] ${label}">${fx(false)}</div>`) +
        '<i class="w-[62px] shrink-0 bg-[#1f1f1f]"></i>' +
        audio1(1287, 1103, `<div class="absolute left-0 top-0 w-[215px] h-4 bg-[#7299cb] flex items-center gap-[7px] pl-[10px] ${label}">${fx(false)}00025.MTS_Dynamic Processing_Part 02 [A]</div>`) +
        '<svg class="absolute left-[600px] top-[71px] w-[10px] h-[8px] text-[#e4eefb]"><use href="#bow" /></svg>') +
      lane('h-[148px]', audioHead('A2', 'A1', 'Audio 2', true),
        `<div class="w-[604px] h-full shrink-0 relative bg-[#18202b]">
          <svg class="absolute inset-0 w-full h-full">${wave(584, 1188, 74, 45, 43, '#2c3c50')}<path d="M0 55h604" stroke="#a5a9ae" stroke-width="2" /></svg>
          <div class="absolute right-1 top-0 w-[211px] h-4 bg-[#2a394d] flex items-center gap-[7px] pl-[5px] ${label}">${fx(false)}2-6 take 1.mp4_Dynamic Processing_Part 01</div>
          <span class="absolute left-[2px] bottom-1 w-[24px] h-[14px] leading-[14px] whitespace-nowrap bg-[#10151c] text-[9.5px] text-center text-[#a8a8a8]">Ch. 1</span>
        </div>
        <i class="w-px bg-[#333]"></i><i class="w-[100px] shrink-0"></i>
        <div class="w-[1101px] h-full shrink-0 relative bg-[#384e68] border-4 border-r-0 border-[#dfe1e4]">
          <svg class="absolute inset-0 w-full h-full">${wave(1293, 2390, 70, 45, 43, '#cdcdcd')}</svg>
          <svg class="absolute -left-[3px] inset-y-0 w-[1100px] h-full"><path d="M0 51h1100" stroke="#e6e6e6" stroke-width="2" /><path d="M0 52.500h1100" stroke="#555" /></svg>
          <div class="absolute left-0 top-0 w-[226px] h-3 bg-[#7299cb] flex items-center gap-[7px] pl-[6px] pb-[3px] ${label}">${fx(false)}2-6 take 2.mp4_Dynamic Processing_Part 02 [A]</div>
          <span class="absolute left-0 bottom-0 w-[22px] h-[13px] leading-[12px] whitespace-nowrap bg-[#212d3c] text-[9.5px] text-[#a8b4c4]">Ch. 1</span>
        </div>`) +
      lane('h-[25px]', audioHead('A3', '', '', false), '') +
      lane('h-[25px]', audioHead('A4', '', '', false), '') +
      lane('h-[25px]', `<div class="w-[236px] h-full bg-[#252525] flex items-center pl-[50px] text-[#b4b4b4]">${lock}<span class="ml-[6px] w-[80px] text-[11.5px] tracking-[-0.3px]">Master</span><span class="w-[71px] text-[#3b97e3]">0.0</span><svg class="w-[11px] h-[10px] mb-[9px] text-[#c8c8c8]"><use href="#bow" /></svg></div>`, '');
  </script>
</body>

</html>
